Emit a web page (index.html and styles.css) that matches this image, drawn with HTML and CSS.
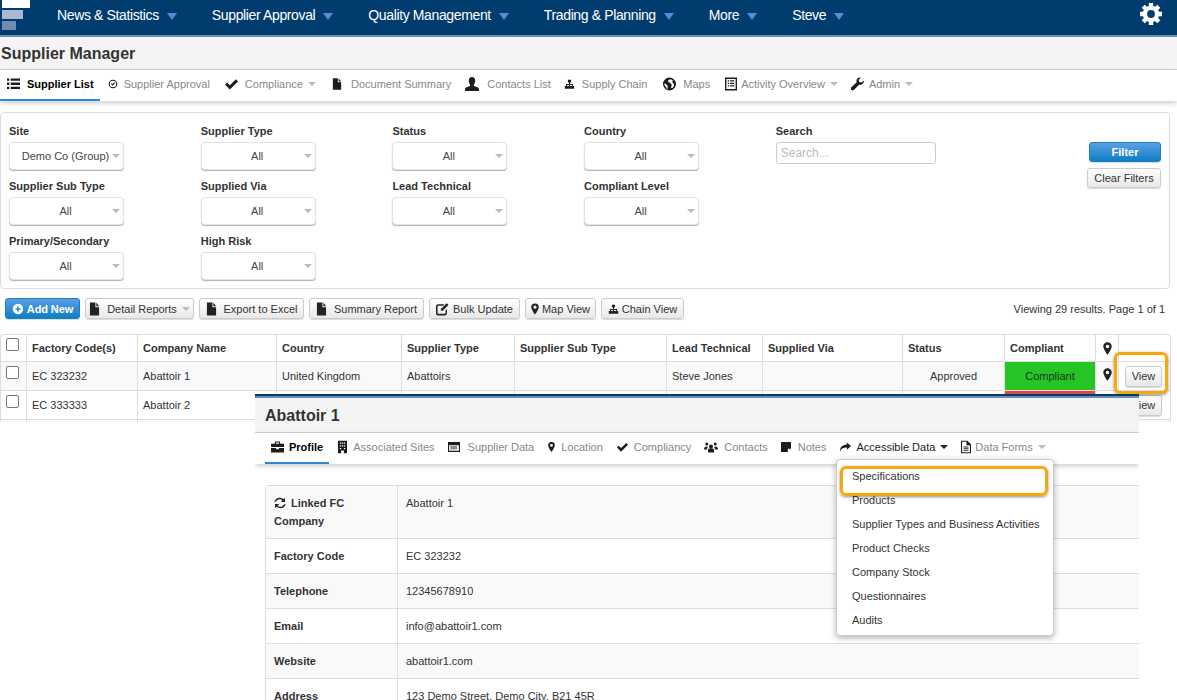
FILE: index.html
```html
<!DOCTYPE html>
<html lang="en">
<head>
<meta charset="utf-8">
<title>Supplier Manager</title>
<link rel="stylesheet" href="styles.css">
</head>
<body>
<svg class="defs" width="0" height="0" aria-hidden="true">
  <symbol id="i-list" viewBox="0 0 14 14"><path d="M0 1h2.500v2.500H0zM4 1h10v2.500H4zM0 5.500h2.500V8H0zM4 5.500h10V8H4zM0 10h2.500v2.500H0zM4 10h10v2.500H4z"/></symbol>
  <symbol id="i-checkc" viewBox="0 0 14 14"><path fill-rule="evenodd" d="M7 1a6 6 0 1 1 0 12A6 6 0 0 1 7 1zm0 1.500a4.500 4.500 0 1 0 0 9 4.500 4.500 0 0 0 0-9z"/><path d="M4 7l1.200-1.200L6.500 7l2.500-2.600L10.200 5.600 6.500 9.400z"/></symbol>
  <symbol id="i-check" viewBox="0 0 14 14"><path d="M0 7.500l2.200-2.200 3 3L11.800 2 14 4.200 5.200 13z"/></symbol>
  <symbol id="i-doc" viewBox="0 0 12 14"><path d="M1 0h6v5h4v9H1zM8 0l3 4H8z"/></symbol>
  <symbol id="i-user" viewBox="0 0 14 14"><path d="M7 0c2 0 3.200 1.500 3.200 3.500S9.200 7.500 8.600 8.500c.3 1 5.400 1.500 5.400 3.500v2H0v-2c0-2 5.100-2.500 5.400-3.500-.6-1-1.600-3-1.600-5S5 0 7 0z"/></symbol>
  <symbol id="i-chain" viewBox="0 0 14 14"><path d="M5 1.500h4v3.500H7.600v2H11.500v2.500H13v3.500H9V9.500h1.300V8.200H7.600v1.300H9v3.500H5V9.500h1.400V8.200H3.700v1.300H5v3.500H1V9.500h1.500V7h3.900V5H5z"/></symbol>
  <symbol id="i-globe" viewBox="0 0 14 14"><path fill-rule="evenodd" d="M7 0a7 7 0 1 1 0 14A7 7 0 0 1 7 0zM8 2L5.500 3 6 5l2 1 1.500 2-1 3 1.500.5 2-3L11 6l-1-1 .5-2zM2 6l-.5 2 2 2.500.5 2 1-.5V9L3.500 7.500z"/></symbol>
  <symbol id="i-table" viewBox="0 0 13 14"><path fill-rule="evenodd" d="M0 0h13v14H0zM1.500 1.500v11h10v-11zM3 3h1.500v1.300H3zM5.500 3H10v1.300H5.500zM3 5.700h1.500V7H3zM5.500 5.700H10V7H5.500zM3 8.400h1.500v1.300H3zM5.500 8.400H10v1.300H5.500z"/></symbol>
  <symbol id="i-wrench" viewBox="0 0 14 14"><path d="M13.800 3.300c.4 1.700-.4 3.500-2.100 4.200-1 .4-1.900.3-2.700 0L3.300 13.300c-.9.9-2.200.9-3 0-.7-.8-.7-2 .1-2.800L6.200 5c-.4-.9-.4-1.900 0-2.900C7 .4 8.800-.4 10.500.2L8.300 2.400l.6 2.500 2.600.6z"/></symbol>
  <symbol id="i-marker" viewBox="0 0 10 14"><path fill-rule="evenodd" d="M5 0a4.700 4.700 0 0 1 4.700 4.700C9.700 7.500 5 14 5 14S.3 7.500.3 4.700A4.700 4.700 0 0 1 5 0zm0 2.700a2 2 0 1 0 0 4 2 2 0 0 0 0-4z"/></symbol>
  <symbol id="i-plus" viewBox="0 0 14 14"><path fill-rule="evenodd" d="M7 1a6 6 0 1 1 0 12A6 6 0 0 1 7 1zM6 4v2H4v2h2v2h2V8h2V6H8V4z"/></symbol>
  <symbol id="i-edit" viewBox="0 0 14 14"><path d="M2.500 2H9L7.600 3.500H2.500a.8.800 0 0 0-.8.800v7a.8.800 0 0 0 .8.800h7a.8.800 0 0 0 .8-.800V8.500L11.800 7v4.500A2.500 2.500 0 0 1 9.300 14H2.500A2.500 2.500 0 0 1 0 11.500v-7A2.500 2.500 0 0 1 2.500 2zM11.500.800l2 2L7.300 9H5.200V6.900z"/></symbol>
  <symbol id="i-case" viewBox="0 0 14 12"><path d="M4.500 0h5l.7 2.500H14V6H0V2.500h3.800zM5.500 1.200l-.3 1.300h3.600l-.3-1.300zM0 7h5.500v1.300h3V7H14v5H0z"/></symbol>
  <symbol id="i-building" viewBox="0 0 10 14"><path fill-rule="evenodd" d="M0 0h10v14H0zM2 2v1.500h1.500V2zM4.300 2v1.500h1.500V2zM6.600 2v1.500H8V2zM2 5v1.500h1.500V5zM4.300 5v1.500h1.500V5zM6.600 5v1.500H8V5zM2 8v1.500h1.500V8zM6.600 8v1.500H8V8zM3.500 11v3h3v-3z"/></symbol>
  <symbol id="i-card" viewBox="0 0 13 11"><path fill-rule="evenodd" d="M0 0h13v11H0zM1.200 3.500v6h10.600v-6zM2.500 5H10v1H2.500zM2.500 7H10v1H2.500z"/></symbol>
  <symbol id="i-users" viewBox="0 0 14 11"><path d="M7 3a2 2 0 1 1 0 4 2 2 0 0 1 0-4zM2.800 1a1.500 1.500 0 1 1 0 3 1.500 1.500 0 0 1 0-3zM11.200 1a1.500 1.500 0 1 1 0 3 1.500 1.500 0 0 1 0-3zM0 8c0-2 1-3 2.800-3l1 .4C3.400 6 3 7 3 8zM14 8c0-2-1-3-2.800-3l-1 .4c.4.6.8 1.600.8 2.600zM4 8.500C4 7.500 4.700 7 5.500 7h3c.8 0 1.500.5 1.500 1.500V11H4z"/></symbol>
  <symbol id="i-note" viewBox="0 0 11 11"><path d="M0 0h11v7L7 11H0zM7.500 7.500v2.700l2.700-2.700z"/></symbol>
  <symbol id="i-share" viewBox="0 0 12 10"><path d="M7.500 0L12 4 7.500 8V5.600C4 5.500 1.700 6.500 0 10c0-4.500 2.500-7.300 7.500-7.600z"/></symbol>
  <symbol id="i-filet" viewBox="0 0 11 14"><path fill-rule="evenodd" d="M0 0h7l4 4v10H0zM1.200 1.200v11.600h8.600V5H6V1.200zM2.800 6.500h5.400v1H2.800zM2.800 8.500h5.400v1H2.800zM2.800 10.500h5.400v1H2.800z"/></symbol>
  <symbol id="i-sync" viewBox="0 0 14 14"><path d="M2.300 5.600H.5C1 2.700 3.500.8 6.500.8c1.700 0 3.300.6 4.500 1.700L12.800 1v4.800H8l1.800-1.900C9 3.100 7.800 2.600 6.500 2.600c-2 0-3.700 1.200-4.200 3zM11.700 8.400h1.800c-.5 2.900-3 4.800-6 4.800-1.700 0-3.300-.6-4.500-1.700L1.200 13V8.200H6L4.200 10.100c.8.800 2 1.300 3.300 1.300 2 0 3.700-1.200 4.200-3z"/></symbol>
</svg>

<header class="nav">
  <div class="logo"><span class="bar b1"></span><span class="bar b2"></span><span class="bar b3"></span></div>
  <ul class="menu">
    <li>News &amp; Statistics<i class="tri"></i></li>
    <li>Supplier Approval<i class="tri"></i></li>
    <li>Quality Management<i class="tri"></i></li>
    <li>Trading &amp; Planning<i class="tri"></i></li>
    <li>More<i class="tri"></i></li>
    <li>Steve<i class="tri"></i></li>
  </ul>
  <svg class="gear" viewBox="0 0 24 24" width="24" height="24"><g stroke="#fff" stroke-width="4.400"><path d="M12 1v22M1 12h22M4.200 4.200l15.600 15.600M19.800 4.200L4.200 19.800"/></g><circle cx="12" cy="12" r="8.300" fill="#fff"/><circle cx="12" cy="12" r="3.900" fill="#003d6e"/></svg>
</header>

<h1 class="title">Supplier Manager</h1>

<nav class="tabs main-tabs">
  <a class="tab active t-list"><svg class="ic w13"><use href="#i-list"/></svg>Supplier List</a>
  <a class="tab mr1"><svg class="ic w10 g6"><use href="#i-checkc"/></svg>Supplier Approval</a>
  <a class="tab"><svg class="ic w13"><use href="#i-check"/></svg>Compliance<i class="car"></i></a>
  <a class="tab ml2"><svg class="ic w10 g9"><use href="#i-doc"/></svg>Document Summary</a>
  <a class="tab"><svg class="ic w14 g8"><use href="#i-user"/></svg>Contacts List</a>
  <a class="tab mln1"><svg class="ic w11"><use href="#i-chain"/></svg>Supply Chain</a>
  <a class="tab ml2"><svg class="ic w13"><use href="#i-globe"/></svg>Maps</a>
  <a class="tab ml1"><svg class="ic w12 g4"><use href="#i-table"/></svg>Activity Overview<i class="car"></i></a>
  <a class="tab mln1"><svg class="ic w13 g5"><use href="#i-wrench"/></svg>Admin<i class="car"></i></a>
</nav>

<section class="filters">
  <div class="fgrid">
    <div class="field"><label>Site</label><div class="sel">Demo Co (Group)</div></div>
    <div class="field"><label>Supplier Type</label><div class="sel">All</div></div>
    <div class="field"><label>Status</label><div class="sel">All</div></div>
    <div class="field"><label>Country</label><div class="sel">All</div></div>
    <div class="field"><label>Search</label><input class="search" type="text" placeholder="Search..."></div>
    <div class="field"><label>Supplier Sub Type</label><div class="sel">All</div></div>
    <div class="field"><label>Supplied Via</label><div class="sel">All</div></div>
    <div class="field"><label>Lead Technical</label><div class="sel">All</div></div>
    <div class="field"><label>Compliant Level</label><div class="sel">All</div></div>
    <div class="field"></div>
    <div class="field"><label>Primary/Secondary</label><div class="sel">All</div></div>
    <div class="field"><label>High Risk</label><div class="sel">All</div></div>
  </div>
  <div class="fbtns">
    <button class="btn primary filter">Filter</button>
    <button class="btn clear">Clear Filters</button>
  </div>
</section>

<div class="toolbar">
  <button class="btn primary add"><svg class="ic w12 g3"><use href="#i-plus"/></svg>Add New</button>
  <button class="btn w108"><svg class="ic w11 g7"><use href="#i-doc"/></svg>Detail Reports<i class="car"></i></button>
  <button class="btn w105"><svg class="ic w11 g7"><use href="#i-doc"/></svg>Export to Excel</button>
  <button class="btn w115"><svg class="ic w11 g7"><use href="#i-doc"/></svg>Summary Report</button>
  <button class="btn w91"><svg class="ic w13 g4"><use href="#i-edit"/></svg>Bulk Update</button>
  <button class="btn w71"><svg class="ic w8 g3"><use href="#i-marker"/></svg>Map View</button>
  <button class="btn w83"><svg class="ic w11 g3"><use href="#i-chain"/></svg>Chain View</button>
  <span class="count">Viewing 29 results. Page 1 of 1</span>
</div>

<div class="tclip">
  <table class="grid">
    <colgroup><col class="c0"><col class="c1"><col class="c2"><col class="c3"><col class="c4"><col class="c5"><col class="c6"><col class="c7"><col class="c8"><col class="c9"><col class="c10"><col class="c11"></colgroup>
    <thead><tr>
      <th><span class="cb"></span></th><th>Factory Code(s)</th><th>Company Name</th><th>Country</th><th>Supplier Type</th><th>Supplier Sub Type</th><th>Lead Technical</th><th>Supplied Via</th><th>Status</th><th>Compliant</th><th class="pin"><svg class="ic mk"><use href="#i-marker"/></svg></th><th></th>
    </tr></thead>
    <tbody>
      <tr class="odd"><td><span class="cb"></span></td><td>EC 323232</td><td>Abattoir 1</td><td>United Kingdom</td><td>Abattoirs</td><td></td><td>Steve Jones</td><td></td><td class="ctr">Approved</td><td class="ctr green">Compliant</td><td class="pin"><svg class="ic mk up"><use href="#i-marker"/></svg></td><td class="vc"><button class="btn view">View</button></td></tr>
      <tr><td><span class="cb"></span></td><td>EC 333333</td><td>Abattoir 2</td><td></td><td></td><td></td><td></td><td></td><td></td><td class="red"></td><td></td><td class="vc"><button class="btn view">View</button></td></tr>
      <tr class="odd"><td>&nbsp;</td><td></td><td></td><td></td><td></td><td></td><td></td><td></td><td></td><td></td><td></td><td></td></tr>
    </tbody>
  </table>
</div>
<div class="hl hl-view"></div>

<section class="modal">
  <h2 class="mtitle">Abattoir 1</h2>
  <nav class="tabs mtabs">
    <a class="tab active"><svg class="ic w13 g5"><use href="#i-case"/></svg>Profile</a>
    <a class="tab"><svg class="ic w9 g6"><use href="#i-building"/></svg>Associated Sites</a>
    <a class="tab mln1"><svg class="ic w12 g8"><use href="#i-card"/></svg>Supplier Data</a>
    <a class="tab"><svg class="ic w7 g6"><use href="#i-marker"/></svg>Location</a>
    <a class="tab"><svg class="ic w11 g6"><use href="#i-check"/></svg>Compliancy</a>
    <a class="tab mln1"><svg class="ic w14 g6"><use href="#i-users"/></svg>Contacts</a>
    <a class="tab mln1"><svg class="ic w10"><use href="#i-note"/></svg>Notes</a>
    <a class="tab open"><svg class="ic w11 g5"><use href="#i-share"/></svg>Accessible Data<i class="car dark"></i></a>
    <a class="tab mln1"><svg class="ic w10 g4"><use href="#i-filet"/></svg>Data Forms<i class="car"></i></a>
  </nav>
  <table class="profile">
    <tbody>
      <tr class="odd tall"><th><svg class="ic w12 g5 sync"><use href="#i-sync"/></svg>Linked FC<br>Company</th><td>Abattoir 1</td></tr>
      <tr><th>Factory Code</th><td>EC 323232</td></tr>
      <tr class="odd"><th>Telephone</th><td>12345678910</td></tr>
      <tr><th>Email</th><td>info@abattoir1.com</td></tr>
      <tr class="odd"><th>Website</th><td>abattoir1.com</td></tr>
      <tr><th>Address</th><td>123 Demo Street, Demo City, B21 45R</td></tr>
    </tbody>
  </table>
  <ul class="dropdown">
    <li>Specifications</li>
    <li>Products</li>
    <li>Supplier Types and Business Activities</li>
    <li>Product Checks</li>
    <li>Company Stock</li>
    <li>Questionnaires</li>
    <li>Audits</li>
  </ul>
  <div class="hl hl-spec"></div>
</section>
</body>
</html>
```
FILE: styles.css
```css
* { box-sizing: border-box; }
html, body { margin: 0; padding: 0; }
body {
  width: 1177px; height: 700px; overflow: hidden; position: relative;
  background: #fff; color: #333;
  font: 11px/14px "Liberation Sans", Arial, sans-serif;
}
.defs { position: absolute; }
ul { list-style: none; margin: 0; padding: 0; }

/* top nav */
.nav {
  display: flex; align-items: flex-start; height: 37px;
  background: #003d6e; border-bottom: 2px solid #6b8db4; color: #fff;
}
.logo { width: 57px; flex: none; padding-left: 2px; display: flex; flex-direction: column; gap: 2px; }
.bar { display: block; height: 8px; }
.b1 { width: 28px; background: #fff; }
.b2 { width: 21px; height: 9px; background: #a9b9d1; }
.b3 { width: 14px; height: 9px; background: #6d8cb0; }
.menu { display: flex; gap: 35px; height: 35px; align-items: center; margin-top: -3px; }
.menu li { display: flex; align-items: center; font-size: 14px; line-height: 20px; letter-spacing: -.37px; white-space: nowrap; }
.tri { width: 0; height: 0; margin-left: 8px; margin-top: 3px; border: 5.500px solid transparent; border-top: 7px solid #4a90d9; border-bottom: 0; }
.gear { margin-left: auto; margin-right: 14px; margin-top: 2px; }

/* page title */
.title {
  margin: 0; height: 33px; padding: 0 1px; background: #f4f4f4; border-bottom: 1px solid #d4d4d4;
  font-size: 16px; line-height: 33px; font-weight: bold; color: #333;
}

/* tabs */
.tabs { display: flex; height: 31px; align-items: center; background: #fff; box-shadow: 0 2px 5px rgba(0,0,0,.2); position: relative; color: #888; }
.main-tabs { gap: 14px; }
.tab { display: flex; align-items: center; height: 100%; padding-bottom: 3px; white-space: nowrap; }
.tab.active { color: #000; font-weight: bold; border-bottom: 2px solid #2b8ad6; padding-bottom: 1px; }
.t-list { padding: 0 6px 1px 7px; margin-right: -6px; }
.mr1 { margin-right: 1px; }
.ml1 { margin-left: 1px; }
.ml2 { margin-left: 2px; }
.mln1 { margin-left: -1px; }
.tab.open { color: #222; }
.ic { display: block; flex: none; height: 14px; fill: #222; margin-right: 7px; }
.tabs .ic { fill: #1c1c1c; }
.w7 { width: 7px; } .w8 { width: 8px; } .w9 { width: 9px; } .w10 { width: 10px; } .w11 { width: 11px; }
.w12 { width: 12px; } .w13 { width: 13px; } .w14 { width: 14px; }
.ic.g3 { margin-right: 3px; } .ic.g4 { margin-right: 4px; } .ic.g5 { margin-right: 5px; } .ic.g6 { margin-right: 6px; }
.ic.g7 { margin-right: 7px; } .ic.g8 { margin-right: 8px; } .ic.g9 { margin-right: 9px; }
.car { display: inline-block; width: 0; height: 0; margin-left: 5px; border: 4px solid transparent; border-top: 4px solid #bbb; border-bottom: 0; }
.car.dark { border-top-color: #222; }

/* filters */
.filters {
  display: flex; justify-content: space-between; height: 177px; margin: 11px 7px 0 0; padding: 12px 8px 0 8px;
  border: 1px solid #ddd; border-radius: 4px;
}
.fgrid { display: grid; grid-template-columns: repeat(5, 191.700px); grid-auto-rows: 55px; }
.field label { display: block; font-weight: bold; line-height: 13px; margin-bottom: 4px; color: #333; }
.sel {
  position: relative; width: 115px; height: 28px; border-radius: 4px; background: #fff;
  border: 1px solid #e3e3e3; box-shadow: 0 1px 1px rgba(0,0,0,.3);
  line-height: 26px; text-align: center; padding-right: 2px; color: #444;
}
.sel::after {
  content: ""; position: absolute; right: 3px; top: 11px; border: 4px solid transparent; border-top: 4px solid #bbb; border-bottom: 0;
}
.search { display: block; width: 160px; height: 22px; border: 1px solid #ccc; border-radius: 3px; padding: 0 4px; font: 12px "Liberation Sans", Arial, sans-serif; }
.search::placeholder { color: #bbb; }
.fbtns { display: flex; flex-direction: column; align-items: flex-end; gap: 6px; padding-top: 17px; }

/* buttons */
.btn {
  display: inline-flex; align-items: center; justify-content: center; height: 21px; padding: 0; margin: 0;
  border: 1px solid #ccc; border-radius: 3px; background: linear-gradient(#fff, #e8e8e8);
  box-shadow: 0 1px 1px rgba(0,0,0,.15); color: #333; font: 11px "Liberation Sans", Arial, sans-serif; white-space: nowrap;
}
.btn.primary { border-color: #1a7fc1; background: linear-gradient(#5b9ee6, #0d7fc2); color: #fff; font-weight: bold; }
.btn.primary .ic { fill: #fff; }
.filter { width: 72px; height: 20px; }
.clear { width: 74px; height: 20px; }
.toolbar { display: flex; align-items: center; height: 21px; margin-top: 9px; padding: 0 12px 0 5px; }
.toolbar .btn { margin-right: 5px; }
.add { width: 75px; letter-spacing: -.1px; }
.w108 { width: 109px; } .w105 { width: 105px; } .w115 { width: 115px; } .w91 { width: 91px; } .w71 { width: 71px; } .w83 { width: 83px; }
.count { margin-left: auto; color: #333; }

/* main table */
.tclip { height: 88px; overflow: hidden; margin-top: 15px; }
.grid { width: 1170px; table-layout: fixed; border-collapse: separate; border-spacing: 0; border: 1px solid #ddd; border-bottom: 0; border-radius: 4px 4px 0 0; }
.c0 { width: 26px; } .c1 { width: 111px; } .c2 { width: 139px; } .c3 { width: 125px; } .c4 { width: 113px; } .c5 { width: 152px; }
.c6 { width: 96px; } .c7 { width: 140px; } .c8 { width: 102px; } .c9 { width: 91px; } .c10 { width: 23px; } .c11 { width: 51px; }
.grid th, .grid td { padding: 0 5px; border-right: 1px solid #ddd; border-bottom: 1px solid #ddd; text-align: left; height: 29px; }
.grid th { height: 27px; font-weight: bold; }
.grid th:last-child, .grid td:last-child { border-right: 0; }
.grid .odd td { background: #f9f9f9; }
.grid td.ctr { text-align: center; }
.grid td.green { background: #26c425; color: #1e3a1e; }
.grid td.red { background: #e0464f; }
.grid td.pin, .grid th.pin { padding: 0 0 0 7px; }
.grid td.vc { padding: 0 0 0 6px; background: #fff; }
.cb { display: block; width: 13px; height: 13px; margin-top: -8px; border: 1px solid #777; border-radius: 2px; background: #fff; }
.mk { width: 9px; height: 13px; margin: 0; }
.mk.up { margin-top: -4px; }
.view { width: 37px; height: 21px; }

/* highlight boxes */
.hl { position: absolute; border: 3px solid #f5a90f; border-radius: 6px; box-shadow: 0 1px 3px rgba(0,0,0,.45); }
.hl-view { left: 1114px; top: 352px; width: 54px; height: 42px; }
.hl-spec { left: 585px; top: 70px; width: 208px; height: 30px; }

/* overlaid record panel */
.modal { position: absolute; left: 255px; top: 394px; width: 884px; height: 306px; background: #fff; overflow: hidden; border-top: 2px solid #003d6e; }
.mtitle {
  margin: 0; height: 37px; padding: 2px 10px 0; background: #f4f4f4; border-top: 2px solid #6b8db4; border-bottom: 1px solid #d4d4d4;
  font-size: 16px; line-height: 32px; font-weight: bold; color: #333;
}
.mtabs { gap: 14px; padding-left: 10px; }
.mtabs .tab.active { padding: 0 6px 1px; margin-right: -5px; }
.profile { width: 900px; margin: 21px 0 0 10px; border-collapse: separate; border-spacing: 0; border: 1px solid #ddd; border-right: 0; border-radius: 4px 0 0 0; }
.profile th, .profile td { height: 35px; padding: 0 8px; text-align: left; vertical-align: middle; border-bottom: 1px solid #ddd; color: #333; line-height: 18px; }
.profile th { width: 132px; border-right: 1px solid #ddd; font-weight: bold; }
.profile .tall th, .profile .tall td { height: 53px; vertical-align: top; padding-top: 8px; }
.profile .odd th, .profile .odd td { background: #f9f9f9; }
.sync { display: inline-block; vertical-align: -3px; margin-right: 4px; }

/* dropdown */
.dropdown {
  position: absolute; left: 581px; top: 63px; width: 218px; height: 177px; padding: 5px 0;
  background: #fff; border: 1px solid #ccc; border-radius: 4px; box-shadow: 0 2px 6px rgba(0,0,0,.3);
}
.dropdown li { height: 24px; padding: 0 15px; line-height: 22px; color: #333; white-space: nowrap; }
```
